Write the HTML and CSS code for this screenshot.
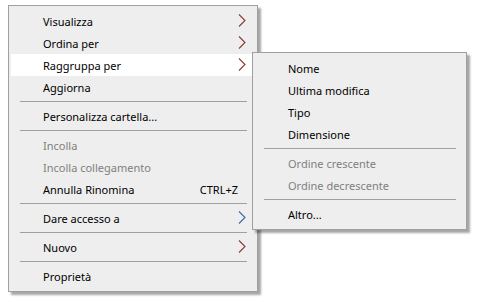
FILE: index.html
```html
<!DOCTYPE html>
<html lang="it">
<head>
    <meta charset="UTF-8">
    <title>Menu contestuale</title>
    <link rel="stylesheet" href="styles.css">
</head>
<body>
    <div class="desktop">
        <div class="menu main-menu">
            <div class="item has-sub"><span class="label">Visualizza</span>
                <svg class="arrow" viewBox="0 0 8 13"><polyline points="1,0.5 7,6.5 1,12.5"/></svg></div>
            <div class="item has-sub"><span class="label">Ordina per</span>
                <svg class="arrow" viewBox="0 0 8 13"><polyline points="1,0.5 7,6.5 1,12.5"/></svg></div>
            <div class="item has-sub active"><span class="label">Raggruppa per</span>
                <svg class="arrow" viewBox="0 0 8 13"><polyline points="1,0.5 7,6.5 1,12.5"/></svg></div>
            <div class="item"><span class="label">Aggiorna</span></div>
            <div class="separator"></div>
            <div class="item"><span class="label">Personalizza cartella...</span></div>
            <div class="separator"></div>
            <div class="item disabled"><span class="label">Incolla</span></div>
            <div class="item disabled"><span class="label">Incolla collegamento</span></div>
            <div class="item"><span class="label">Annulla Rinomina</span><span class="shortcut">CTRL+Z</span></div>
            <div class="separator"></div>
            <div class="item has-sub"><span class="label">Dare accesso a</span>
                <svg class="arrow blue" viewBox="0 0 8 13"><polyline points="1,0.5 7,6.5 1,12.5"/></svg></div>
            <div class="separator"></div>
            <div class="item has-sub"><span class="label">Nuovo</span>
                <svg class="arrow" viewBox="0 0 8 13"><polyline points="1,0.5 7,6.5 1,12.5"/></svg></div>
            <div class="separator"></div>
            <div class="item"><span class="label">Proprietà</span></div>
        </div>

        <!-- submenu of "Raggruppa per", overlaps the main menu -->
        <div class="menu sub-menu">
            <div class="item"><span class="label">Nome</span></div>
            <div class="item"><span class="label">Ultima modifica</span></div>
            <div class="item"><span class="label">Tipo</span></div>
            <div class="item"><span class="label">Dimensione</span></div>
            <div class="separator"></div>
            <div class="item disabled"><span class="label">Ordine crescente</span></div>
            <div class="item disabled"><span class="label">Ordine decrescente</span></div>
            <div class="separator"></div>
            <div class="item"><span class="label">Altro...</span></div>
        </div>
    </div>
</body>
</html>
```

FILE: styles.css
```css
body {
    margin: 0;
    background-color: #fff;
    font-family: 'Noto Sans', 'Liberation Sans', sans-serif;
    font-size: 11px;
    color: #000;
}

.desktop {
    position: relative;
    width: 480px;
    height: 302px;
    padding: 5px 0 0 8px;
    box-sizing: border-box;
}

.menu {
    background-color: #eeeeee;
    border: 1px solid #a0a0a0;
    box-shadow: 3px 3px 2px rgba(0, 0, 0, 0.35);
    padding: 4px 2px;
    box-sizing: border-box;
}

.main-menu {
    width: 250px;
}

.sub-menu {
    position: absolute;
    left: 252px;
    top: 52px;
    width: 215px;
}

.item {
    position: relative;
    display: flex;
    align-items: center;
    height: 22px;
    padding: 0 17px 0 32px;
    white-space: nowrap;
}

.sub-menu .item {
    padding-left: 33px;
}

.item.active {
    background-color: #fff;
}

.item.disabled {
    color: #808080;
}

.label {
    flex: 1;
}

.shortcut {
    text-align: right;
}

.arrow {
    position: absolute;
    right: 9px;
    top: 4px;
    width: 8px;
    height: 13px;
    fill: none;
    stroke: #8a3b34;
    stroke-width: 1.1;
}

.arrow.blue {
    stroke: #3a6aa8;
}

.separator {
    height: 1px;
    margin: 3px 8px 3px 9px;
    background-color: #a0a0a0;
}
```
